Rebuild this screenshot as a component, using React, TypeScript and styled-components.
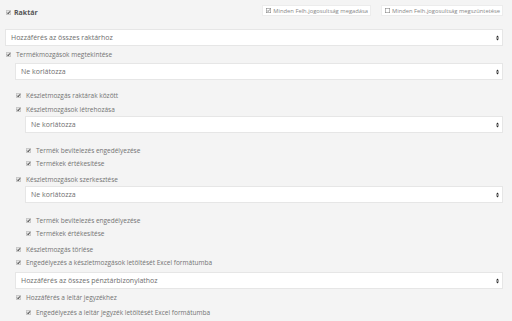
import { createGlobalStyle } from 'styled-components';
import styled from 'styled-components';

const GlobalStyle = createGlobalStyle`
  html, body {
    margin: 0;
    padding: 0;
    background: #f4f4f4;
  }
  body {
    font-family: 'Open Sans', 'Liberation Sans', sans-serif;
    font-size: 7px;
    color: #737373;
  }
`;

const Page = styled.div`
  padding: 5px 9px 0 5px;
  width: 512px;
  height: 321px;
  box-sizing: border-box;
  overflow: hidden;
`;

const Header = styled.div`
  display: flex;
  align-items: flex-start;
  justify-content: space-between;
  height: 13px;
`;

const Title = styled.label`
  display: flex;
  align-items: center;
  gap: 3px;
  margin-top: 3px;
  margin-left: 1px;
  font-weight: 700;
  color: #555;
`;

const Actions = styled.div`
  display: flex;
  gap: 10px;
`;

const ActionButton = styled.button`
  display: flex;
  align-items: center;
  gap: 2px;
  height: 11px;
  padding: 0 2px 0 3px;
  border: 1px solid #ececec;
  background: #fff;
  font-family: inherit;
  font-size: 5.8px;
  color: #888;
  cursor: pointer;
`;

const Row = styled.label<{ $level: number; $mt: number }>`
  display: flex;
  align-items: center;
  gap: 5px;
  height: 13px;
  margin-top: ${(p) => p.$mt}px;
  padding-left: ${(p) => p.$level * 10 + 1}px;
  font-size: 6.5px;
`;

const Select = styled.div<{ $level: number; $mt: number }>`
  display: flex;
  align-items: center;
  justify-content: space-between;
  height: 17px;
  box-sizing: border-box;
  margin-top: ${(p) => p.$mt}px;
  margin-left: ${(p) => p.$level * 10}px;
  padding: 0 3px 0 5px;
  background: #fff;
  border: 1px solid #e6e6e6;
  font-size: 7px;
  color: #6e6e6e;
`;

function CheckMark() {
  return (
    <svg width="5" height="5" viewBox="0 0 10 10">
      <rect x="0.5" y="0.5" width="9" height="9" rx="1.5" fill="#e4e4e4" stroke="#9a9a9a" />
      <path d="M2.5 5.5 L4.3 7.3 L7.8 2.8" fill="none" stroke="#111" strokeWidth="1.8" />
    </svg>
  );
}

function BoxIcon({ checked }: { checked: boolean }) {
  return (
    <svg width="5" height="5" viewBox="0 0 10 10">
      <rect x="0.5" y="0.5" width="9" height="9" fill="#fff" stroke="#777" />
      {checked && <path d="M2.3 5 L4.2 7 L7.8 2.8" fill="none" stroke="#555" strokeWidth="1.4" />}
    </svg>
  );
}

function Arrows() {
  return (
    <svg width="3" height="6" viewBox="0 0 6 12">
      <path d="M0 5 L3 1 L6 5 Z" fill="#222" />
      <path d="M0 7 L3 11 L6 7 Z" fill="#222" />
    </svg>
  );
}

type Item = { kind: 'check' | 'select'; level: number; mt: number; text: string };

const items: Item[] = [
  { kind: 'select', level: 0, mt: 11, text: 'Hozzáférés az összes raktárhoz' },
  { kind: 'check', level: 0, mt: 1.5, text: 'Termékmozgások megtekintése' },
  { kind: 'select', level: 1, mt: 2.5, text: 'Ne korlátozza' },
  { kind: 'check', level: 1, mt: 8.5, text: 'Készletmozgás raktárak között' },
  { kind: 'check', level: 1, mt: 1.5, text: 'Készletmozgások létrehozása' },
  { kind: 'select', level: 2, mt: 0, text: 'Ne korlátozza' },
  { kind: 'check', level: 2, mt: 10.5, text: 'Termék bevitelezés engedélyezése' },
  { kind: 'check', level: 2, mt: 0, text: 'Termékek értékesítése' },
  { kind: 'check', level: 1, mt: 3.5, text: 'Készletmozgások szerkesztése' },
  { kind: 'select', level: 2, mt: 0, text: 'Ne korlátozza' },
  { kind: 'check', level: 2, mt: 10.5, text: 'Termék bevitelezés engedélyezése' },
  { kind: 'check', level: 2, mt: 0, text: 'Termékek értékesítése' },
  { kind: 'check', level: 1, mt: 3.5, text: 'Készletmozgás törlése' },
  { kind: 'check', level: 1, mt: 0, text: 'Engedélyezés a készletmozgások letöltését Excel formátumba' },
  { kind: 'select', level: 1, mt: 3, text: 'Hozzáférés az összes pénztárbizonylathoz' },
  { kind: 'check', level: 1, mt: 2, text: 'Hozzáférés a leltár jegyzékhez' },
  { kind: 'check', level: 2, mt: 2, text: 'Engedélyezés a leltár jegyzék letöltését Excel formátumba' },
];

export default function App() {
  return (
    <>
      <GlobalStyle />
      <Page>
        <Header>
          <Title>
            <CheckMark />
            Raktár
          </Title>
          <Actions>
            <ActionButton>
              <BoxIcon checked />
              Minden Felh.jogosultság megadása
            </ActionButton>
            <ActionButton>
              <BoxIcon checked={false} />
              Minden Felh.jogosultság megszüntetése
            </ActionButton>
          </Actions>
        </Header>
        {items.map((it, i) =>
          it.kind === 'select' ? (
            <Select key={i} $level={it.level} $mt={it.mt}>
              <span>{it.text}</span>
              <Arrows />
            </Select>
          ) : (
            <Row key={i} $level={it.level} $mt={it.mt}>
              <CheckMark />
              {it.text}
            </Row>
          )
        )}
      </Page>
    </>
  );
}
